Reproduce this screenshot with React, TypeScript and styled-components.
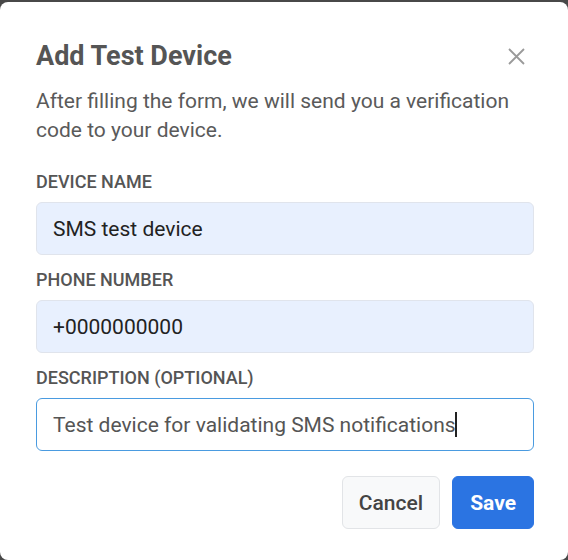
import React from 'react'
import styled, { createGlobalStyle } from 'styled-components'

const GlobalStyle = createGlobalStyle`
  html, body {
    margin: 0;
    padding: 0;
    background: #484848;
    font-family: Roboto, "Liberation Sans", Arial, sans-serif;
  }
`

const Modal = styled.div`
  background: #fff;
  border-radius: 8px;
  margin-top: 2px;
  min-height: 558px;
  padding: 39px 34px 0 36px;
  box-sizing: border-box;
`

const Header = styled.div`
  display: flex;
  align-items: center;
  justify-content: space-between;
`

const Title = styled.h2`
  color: #555;
  font-size: 27px;
  font-weight: 700;
  line-height: 30px;
  margin: 0;
`

const CloseButton = styled.button`
  background: none;
  border: none;
  padding: 0;
  margin-right: 8px;
  width: 20px;
  height: 20px;
  display: flex;
  align-items: center;
  justify-content: center;
  cursor: pointer;
`

const Intro = styled.p`
  color: #5a5a5a;
  font-size: 21px;
  line-height: 29px;
  margin: 16px 0 0;
`

const Form = styled.form`
  display: flex;
  flex-direction: column;
  gap: 15px;
  margin-top: 27px;
`

const Field = styled.label`
  display: flex;
  flex-direction: column;
  gap: 10px;
`

const Label = styled.span`
  color: #555;
  font-size: 18px;
  font-weight: 500;
  line-height: 20px;
  text-transform: uppercase;
`

const InputWrap = styled.div`
  position: relative;
`

const Input = styled.input<{ $filled?: boolean; $focused?: boolean }>`
  box-sizing: border-box;
  width: 100%;
  height: 53px;
  padding: 0 16px;
  border-radius: 6px;
  border: 1px solid ${p => (p.$focused ? '#4a9be0' : '#e0e4ec')};
  background: ${p => (p.$filled ? '#e8f0fe' : '#fff')};
  color: ${p => (p.$filled ? '#222' : '#555')};
  font-family: inherit;
  font-size: 21px;
  outline: none;
`

const Caret = styled.span`
  position: absolute;
  top: 14px;
  width: 1.5px;
  height: 25px;
  background: #222;
`

const Actions = styled.div`
  display: flex;
  justify-content: flex-end;
  gap: 12px;
  margin-top: 25px;
`

const Button = styled.button<{ $primary?: boolean }>`
  height: 53px;
  padding: 0 ${p => (p.$primary ? '17px' : '16px')};
  border-radius: 6px;
  border: 1px solid ${p => (p.$primary ? '#2b74e2' : '#e2e4e7')};
  background: ${p => (p.$primary ? '#2b74e2' : '#f8f9fa')};
  color: ${p => (p.$primary ? '#fff' : '#444')};
  font-family: inherit;
  font-size: 21px;
  font-weight: ${p => (p.$primary ? 700 : 500)};
  cursor: pointer;
`

export default function App() {
  return (
    <>
      <GlobalStyle />
      <Modal>
        <Header>
          <Title>Add Test Device</Title>
          <CloseButton aria-label="Close">
            <svg width="17" height="17" viewBox="0 0 17 17">
              <path d="M1 1 L16 16 M16 1 L1 16" stroke="#9a9a9a" strokeWidth="1.8" />
            </svg>
          </CloseButton>
        </Header>
        <Intro>After filling the form, we will send you a verification code to your device.</Intro>
        <Form onSubmit={e => e.preventDefault()}>
          <Field>
            <Label>Device name</Label>
            <Input $filled defaultValue="SMS test device" />
          </Field>
          <Field>
            <Label>Phone number</Label>
            <Input $filled defaultValue="+0000000000" />
          </Field>
          <Field>
            <Label>Description (optional)</Label>
            <InputWrap>
              <Input $focused defaultValue="Test device for validating SMS notifications" />
              <Caret style={{ left: 419 }} />
            </InputWrap>
          </Field>
        </Form>
        <Actions>
          <Button type="button">Cancel</Button>
          <Button type="button" $primary>
            Save
          </Button>
        </Actions>
      </Modal>
    </>
  )
}
